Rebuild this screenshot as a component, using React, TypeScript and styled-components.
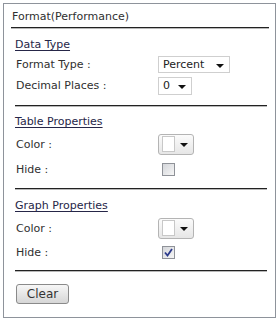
import React from "react";
import styled, { createGlobalStyle } from "styled-components";

const GlobalStyle = createGlobalStyle`
    html, body {
        margin: 0;
        padding: 0;
        background: #ffffff;
    }
    body {
        padding: 3px 0 0 3px;
        font-family: "DejaVu Sans", Verdana, sans-serif;
        font-size: 11px;
        color: #303030;
    }
`;

const Panel = styled.div`
    box-sizing: border-box;
    width: 273px;
    height: 315px;
    border: 1px solid #8e939b;
    display: flex;
    flex-direction: column;
`;

const Header = styled.div`
    margin: 0 6px 0 7px;
    padding: 5px 0 2px 1px;
    line-height: 16px;
    border-bottom: 1px solid #222;
    box-shadow: 0 1px 0 #b8b8b8;
`;

const Section = styled.div<{ $top: number; $bottom: number }>`
    margin: 0 8px 0 11px;
    padding: ${(p) => p.$top}px 0 ${(p) => p.$bottom}px 0;
    border-bottom: 1px solid #222;
    box-shadow: 0 1px 0 #b8b8b8;
`;

const Heading = styled.div`
    line-height: 18px;
    color: #262648;
    text-decoration: underline;
    text-underline-offset: 2px;
`;

const Row = styled.div<{ $h: number }>`
    display: flex;
    align-items: center;
    height: ${(p) => p.$h}px;
`;

const Label = styled.div`
    width: 143px;
    flex: none;
    padding-left: 1px;
    box-sizing: border-box;
`;

const Select = styled.div<{ $w: number; $h: number }>`
    box-sizing: border-box;
    width: ${(p) => p.$w}px;
    height: ${(p) => p.$h}px;
    border: 1px solid #cfcfcf;
    background: #fff;
    display: flex;
    align-items: center;
    justify-content: space-between;
    padding: 0 5px 0 4px;
    color: #222;
    font-size: 11px;
`;

const Arrow = styled.span`
    width: 0;
    height: 0;
    border-left: 4px solid transparent;
    border-right: 4px solid transparent;
    border-top: 4px solid #111;
    margin-top: 2px;
`;

const ColorButton = styled.div`
    box-sizing: border-box;
    width: 36px;
    height: 21px;
    border: 1px solid #b4b4b4;
    border-radius: 3px;
    background: linear-gradient(#fbfbfb, #e6e6e6);
    display: flex;
    align-items: center;
    padding: 0 5px 0 3px;
    gap: 5px;
`;

const Swatch = styled.span`
    box-sizing: border-box;
    width: 14px;
    height: 16px;
    border: 1px solid #c8c8c8;
    background: #fff;
`;

const Check = styled.span`
    box-sizing: border-box;
    width: 13px;
    height: 13px;
    margin-left: 4px;
    border: 1px solid #8f9298;
    background: linear-gradient(135deg, #d4d6da, #f6f6f6);
    display: flex;
    align-items: center;
    justify-content: center;
`;

const Footer = styled.div`
    padding: 13px 0 0 12px;
`;

const Button = styled.button`
    box-sizing: border-box;
    width: 53px;
    height: 20px;
    border: 1px solid #8a8a8a;
    border-radius: 3px;
    background: linear-gradient(#f7f7f7, #d6d6d6);
    font-family: "DejaVu Sans", Verdana, sans-serif;
    font-size: 12px;
    color: #333;
    padding: 0;
`;

const ColorPicker: React.FC = () => (
    <ColorButton>
        <Swatch />
        <Arrow />
    </ColorButton>
);

const CheckBox: React.FC<{ checked?: boolean }> = ({ checked }) => (
    <Check>
        {checked && (
            <svg width="9" height="9" viewBox="0 0 9 9">
                <path d="M1 4.5 L3.5 7.5 L8 1" fill="none" stroke="#2c3a8c" strokeWidth="1.8" />
            </svg>
        )}
    </Check>
);

export default function App() {
    return (
        <>
            <GlobalStyle />
            <Panel>
                <Header>Format(Performance)</Header>
                <Section $top={8} $bottom={9}>
                    <Heading>Data Type</Heading>
                    <Row $h={21}>
                        <Label>Format Type :</Label>
                        <Select $w={72} $h={17}>
                            Percent
                            <Arrow />
                        </Select>
                    </Row>
                    <Row $h={21}>
                        <Label>Decimal Places :</Label>
                        <Select $w={34} $h={18}>
                            0
                            <Arrow />
                        </Select>
                    </Row>
                </Section>
                <Section $top={7} $bottom={7}>
                    <Heading>Table Properties</Heading>
                    <Row $h={26}>
                        <Label>Color :</Label>
                        <ColorPicker />
                    </Row>
                    <Row $h={24}>
                        <Label>Hide :</Label>
                        <CheckBox />
                    </Row>
                </Section>
                <Section $top={8} $bottom={7}>
                    <Heading>Graph Properties</Heading>
                    <Row $h={26}>
                        <Label>Color :</Label>
                        <ColorPicker />
                    </Row>
                    <Row $h={22}>
                        <Label>Hide :</Label>
                        <CheckBox checked />
                    </Row>
                </Section>
                <Footer>
                    <Button>Clear</Button>
                </Footer>
            </Panel>
        </>
    );
}
